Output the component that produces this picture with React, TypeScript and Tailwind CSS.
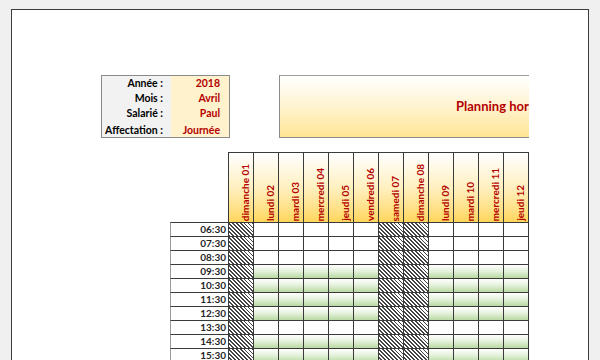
import React from "react";

const days = [
  "dimanche 01",
  "lundi 02",
  "mardi 03",
  "mercredi 04",
  "jeudi 05",
  "vendredi 06",
  "samedi 07",
  "dimanche 08",
  "lundi 09",
  "mardi 10",
  "mercredi 11",
  "jeudi 12",
];

const weekend = [0, 6, 7];

const hours = [
  "06:30",
  "07:30",
  "08:30",
  "09:30",
  "10:30",
  "11:30",
  "12:30",
  "13:30",
  "14:30",
  "15:30",
  "16:30",
  "17:30",
];

const worked = ["09:30", "10:30", "11:30", "12:30", "14:30", "15:30", "16:30", "17:30"];

const infos = [
  { label: "Année :", value: "2018", h: "h-[15px] leading-[15px]" },
  { label: "Mois :", value: "Avril", h: "h-[15px] leading-[15px]" },
  { label: "Salarié :", value: "Paul", h: "h-[15px] leading-[15px]" },
  { label: "Affectation :", value: "Journée", h: "h-[16px] leading-[19px]" },
];

export default function App() {
  return (
    <div className="w-[600px] h-[360px] overflow-hidden bg-[#f0f0f0] pt-[9px] pl-[11px] font-[Lato,sans-serif]">
      <div className="w-[578px] h-[400px] bg-white border border-[#3c3c3c]">
        <div className="w-[517px] overflow-hidden">
          {/* top section */}
          <div className="flex mt-[65px] pl-[89px]">
            <div className="w-[129px] h-[63px] border border-[#8a8a8a] flex flex-col shrink-0">
              {infos.map((r) => (
                <div key={r.label} className={`flex ${r.h}`}>
                  <div className="w-[69px] bg-[#f2f2f2] text-right pr-[8px] text-[10.5px] font-bold text-black">
                    {r.label}
                  </div>
                  <div className="flex-1 bg-[#fff2cc] text-right pr-[9px] text-[10.5px] font-bold text-[#b40000]">
                    {r.value}
                  </div>
                </div>
              ))}
            </div>
            <div className="ml-[49px] w-[420px] h-[63px] shrink-0 border border-r-0 border-[#8c8c8c] border-t-[#a0a0a0] bg-linear-to-b from-white via-[#fff3cf] to-[#ffe593] flex items-center pl-[176px]">
              <span className="text-[13px] font-bold text-[#b40000] whitespace-nowrap">
                Planning horaire mensuel
              </span>
            </div>
          </div>

          {/* planning grid */}
          <div className="mt-[14px] ml-[158px] flex flex-col">
            <div className="flex">
              <div className="w-[58px] shrink-0" />
              {days.map((d, i) => (
                <div
                  key={d}
                  className={`${i === 0 ? "w-[26px] border-l" : "w-[25px]"} h-[70px] shrink-0 border-t border-r border-[#3a3a3a] bg-linear-to-b from-white via-[#fff0c0] to-[#ffd659] flex justify-end items-end pr-[3px] pb-[1px]`}
                >
                  <span className="[writing-mode:vertical-rl] rotate-180 text-[10px] font-bold text-[#b40000] leading-none whitespace-nowrap">
                    {d}
                  </span>
                </div>
              ))}
            </div>
            {hours.map((h) => (
              <div key={h} className="flex">
                <div className="w-[59px] h-[14px] shrink-0 border-t border-l border-r border-[#3a3a3a] border-l-[#9a9a9a] bg-white text-right pr-[2px] text-[10px] font-bold text-[#262626] leading-[13px]">
                  {h}
                </div>
                {days.map((d, i) => {
                  let fill = "bg-white";
                  if (weekend.includes(i)) {
                    fill =
                      "bg-[repeating-linear-gradient(45deg,#444_0px,#444_0.9px,#fff_0.9px,#fff_2.8px)]";
                  } else if (worked.includes(h)) {
                    fill = "bg-linear-to-b from-white via-[#e3f0da] to-[#bad9a3]";
                  }
                  return (
                    <div
                      key={d}
                      className={`w-[25px] h-[14px] shrink-0 border-t border-r border-[#3a3a3a] ${fill}`}
                    />
                  );
                })}
              </div>
            ))}
          </div>
        </div>
      </div>
    </div>
  );
}
